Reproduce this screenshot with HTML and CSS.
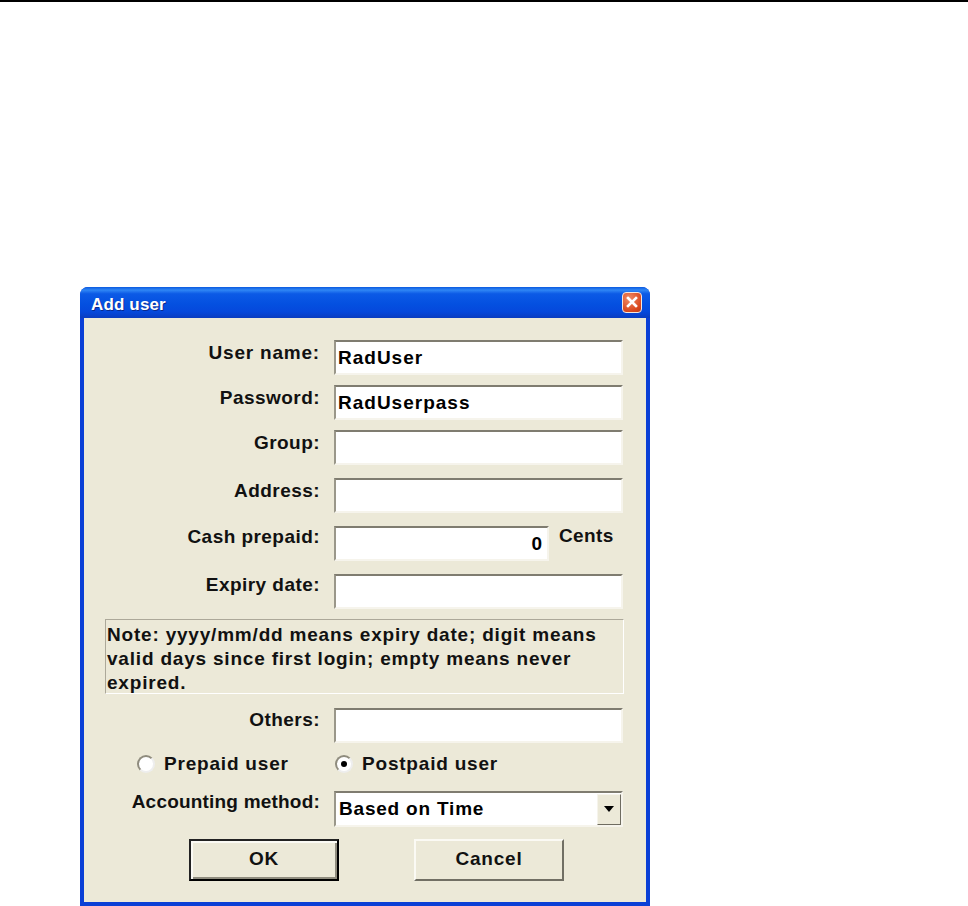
FILE: index.html
```html
<!DOCTYPE html>
<html lang="en">
<head>
<meta charset="utf-8">
<title>Add user</title>
<link rel="stylesheet" href="styles.css">
</head>
<body>
<div class="rule"></div>
<section class="window">
  <header class="titlebar">
    <span class="title">Add user</span>
    <span class="close">
      <svg width="12" height="12" viewBox="0 0 12 12"><path d="M2 2L10 10M10 2L2 10" stroke="#fff" stroke-width="2.6" stroke-linecap="square" fill="none"/></svg>
    </span>
  </header>
  <form class="client">
    <label class="label label-wide">User name:</label>
    <div class="field"><span class="value">RadUser</span></div>
    <label class="label">Password:</label>
    <div class="field"><span class="value">RadUserpass</span></div>
    <label class="label">Group:</label>
    <div class="field"></div>
    <label class="label gap-lg">Address:</label>
    <div class="field gap-lg"></div>
    <label class="label gap-lg tight">Cash prepaid:</label>
    <div class="cash gap-lg">
      <div class="field field-short"><span class="value value-right">0</span></div>
      <span class="cents">Cents</span>
    </div>
    <label class="label gap-lg tight">Expiry date:</label>
    <div class="field gap-lg"></div>
    <p class="note">Note: yyyy/mm/dd means expiry date; digit means valid days since first login; empty means never expired.</p>
    <label class="label others">Others:</label>
    <div class="field others"></div>
    <div class="radios">
      <span class="radio-item radio-first"><span class="radio"></span>Prepaid user</span>
      <span class="radio-item"><span class="radio radio-on"></span>Postpaid user</span>
    </div>
    <label class="label method">Accounting method:</label>
    <div class="field combo method">
      <span class="value combo-value">Based on Time</span>
      <span class="combo-btn"><svg width="10" height="6" viewBox="0 0 10 6"><path d="M0 0H10L5 6Z" fill="#000"/></svg></span>
    </div>
    <div class="buttons">
      <button type="button" class="btn btn-default">OK</button>
      <button type="button" class="btn">Cancel</button>
    </div>
  </form>
</section>
</body>
</html>
```

FILE: styles.css
```css
* { box-sizing: border-box; }
html, body { margin: 0; padding: 0; }
body {
  width: 968px;
  height: 906px;
  background: #fff;
  overflow: hidden;
  font: 700 19px/20px "Liberation Sans", Arial, sans-serif;
  letter-spacing: 0.8px;
  color: #111;
}
.rule { height: 2px; background: #000; }
.window {
  width: 570px;
  height: 619px;
  margin: 285px 0 0 80px;
  display: flex;
  flex-direction: column;
  background: #0a3fd6;
  border-radius: 8px 8px 0 0;
  padding: 0 4px 4px;
}
.titlebar {
  height: 31px;
  margin: 0 -4px;
  padding: 0 8px 0 11px;
  display: flex;
  align-items: center;
  justify-content: space-between;
  border-radius: 8px 8px 0 0;
  background: linear-gradient(180deg, #0a5ae0 0%, #2f86f5 10%, #0c5ae6 22%, #0450e0 55%, #0548dc 80%, #0a3cc0 100%);
}
.title {
  color: #fff;
  font-size: 17px;
  letter-spacing: 0.15px;
  text-shadow: 1px 1px 0 #0a2a90;
  padding-top: 4px;
}
.close {
  width: 20px;
  height: 21px;
  display: flex;
  align-items: center;
  justify-content: center;
  border: 1px solid #f4e6de;
  border-radius: 4px;
  background: radial-gradient(circle at 35% 30%, #ef8c68, #d9481e 70%, #b93a18);
  margin-top: -1px;
}
.client {
  flex: 1;
  background: #ece9d8;
  padding: 22px 0 0;
  display: grid;
  grid-template-columns: 236px 289px;
  grid-auto-rows: min-content;
  column-gap: 14px;
  row-gap: 10px;
}
.label {
  text-align: right;
  padding-top: 3px;
  white-space: nowrap;
  letter-spacing: 0.45px;
}
.label-wide { letter-spacing: 0.8px; }
.field {
  height: 35px;
  background: #fff;
  border-style: solid;
  border-width: 2px;
  border-color: #7f7c70 #f6f4ec #f6f4ec #9a978a;
  display: flex;
  align-items: center;
  padding: 1px 2px 0;
}
.value { white-space: nowrap; color: #000; letter-spacing: 1px; }
.value-right { margin-left: auto; margin-right: 2px; }
.gap-lg { margin-top: 3px; }
.tight { padding-top: 1px; }
.cash { display: flex; gap: 10px; }
.field-short { width: 215px; }
.cents { letter-spacing: 0.4px; }
.note {
  grid-column: 1 / -1;
  margin: 0 0 0 21px;
  width: 519px;
  height: 75px;
  border: 1px solid;
  border-color: #aca899 #fff #fff #aca899;
  padding: 3px 1px 0;
  line-height: 24px;
  letter-spacing: 0.8px;
}
.others { margin-top: 4px; }
.label.others { padding-top: 2px; }
.radios {
  grid-column: 1 / -1;
  display: flex;
  height: 20px;
  margin-top: 1px;
  padding-left: 53px;
}
.radio-item { display: flex; align-items: center; gap: 9px; white-space: nowrap; }
.radio-first { width: 198px; }
.radio {
  width: 18px;
  height: 18px;
  border-radius: 50%;
  background: #fff;
  border: 2px solid;
  border-color: #8f8c7e #eee #eee #8f8c7e;
  display: flex;
  align-items: center;
  justify-content: center;
}
.radio-on::after {
  content: "";
  width: 6px;
  height: 6px;
  border-radius: 50%;
  background: #000;
}
.label.method { margin-top: 7px; padding-top: 1px; letter-spacing: 0.2px; }
.method { margin-top: 7px; }
.combo { height: 36px; padding: 0 0 0 3px; justify-content: space-between; }
.combo-value { letter-spacing: 0.8px; }
.combo-btn {
  width: 24px;
  height: 31px;
  background: #ece9d8;
  border: 1px solid;
  border-color: #f6f4ec #6f6c60 #6f6c60 #f6f4ec;
  display: flex;
  align-items: center;
  justify-content: center;
}
.buttons {
  grid-column: 1 / -1;
  display: flex;
  gap: 75px;
  padding-left: 105px;
  margin-top: 2px;
}
.btn {
  width: 150px;
  height: 42px;
  background: #ece9d8;
  font: inherit;
  letter-spacing: inherit;
  color: #111;
  border: 2px solid;
  border-color: #fbfaf4 #716f64 #716f64 #fbfaf4;
  padding: 0 0 3px;
  border-radius: 0;
}
.btn-default {
  border-color: #222 #000 #000 #222;
  box-shadow: inset 2px 2px 0 #fbfaf4, inset -2px -2px 0 #8f8c7e;
}
```
